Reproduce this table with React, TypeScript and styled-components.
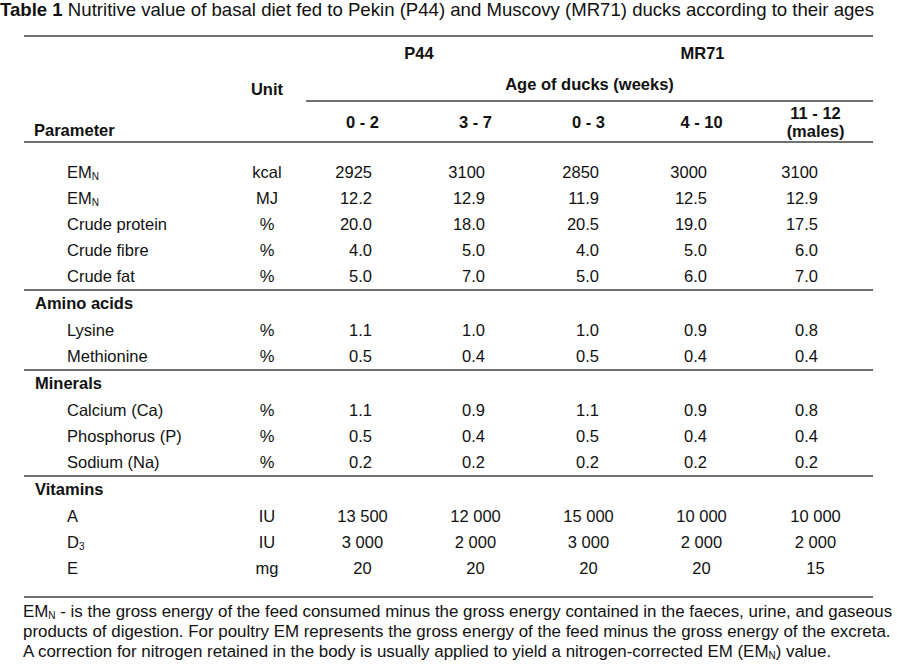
import React from 'react';
import styled, { createGlobalStyle } from 'styled-components';

const GlobalStyle = createGlobalStyle`
  html, body {
    margin: 0;
    padding: 0;
    background: #ffffff;
  }
  body {
    font-family: 'Liberation Sans', Arial, sans-serif;
    color: #111111;
  }
`;

const Page = styled.div`
  width: 897px;
  height: 664px;
  overflow: hidden;
  font-size: 16.5px;
`;

const Title = styled.div`
  font-size: 18.6px;
  line-height: 19px;
  white-space: nowrap;
  b {
    font-weight: bold;
  }
`;

const Table = styled.table`
  margin: 16px 0 0 24px;
  width: 849px;
  table-layout: fixed;
  border-collapse: collapse;
  border-top: 2px solid #707070;
`;

const HeadCell = styled.th<{ $align?: 'left' | 'center'; $valign?: 'top' | 'middle' | 'bottom'; $rule?: boolean; $h?: number }>`
  font-weight: bold;
  padding: 0;
  text-align: ${p => p.$align || 'center'};
  vertical-align: ${p => p.$valign || 'middle'};
  height: ${p => (p.$h ? `${p.$h}px` : 'auto')};
  line-height: 18px;
  ${p => p.$align === 'left' && 'padding-left: 10px; padding-bottom: 2px;'}
  ${p => p.$rule && 'border-bottom: 2px solid #707070;'}
`;

const Group = styled.tbody`
  border-bottom: 2px solid #707070;
`;

const Row = styled.tr`
  height: 26px;
`;

const Spacer = styled.tr<{ $h: number }>`
  height: ${p => p.$h}px;
`;

const GroupName = styled.td`
  font-weight: bold;
  padding: 0 0 2px 11px;
  line-height: 24px;
`;

const ParamCell = styled.td`
  padding: 0 0 0 43px;
  line-height: 26px;
  white-space: nowrap;
`;

const UnitCell = styled.td`
  padding: 0;
  text-align: center;
  line-height: 26px;
`;

const NUM_PAD = [47, 47, 46, 51, 55];

const NumCell = styled.td<{ $col: number; $center?: boolean }>`
  line-height: 26px;
  padding: 0 ${p => (p.$center ? 0 : NUM_PAD[p.$col])}px 0 0;
  text-align: ${p => (p.$center ? 'center' : 'right')};
`;

const Footnote = styled.div`
  margin: 4px 0 0 23px;
  font-size: 16.9px;
  line-height: 20px;
  white-space: nowrap;
`;

const Sub = styled.sub`
  font-size: 10px;
  vertical-align: -2px;
  line-height: 0;
`;

type DataRow = { name: React.ReactNode; unit: string; values: string[] };

const EMN = (
  <>
    EM<Sub>N</Sub>
  </>
);

const basic: DataRow[] = [
  { name: EMN, unit: 'kcal', values: ['2925', '3100', '2850', '3000', '3100'] },
  { name: EMN, unit: 'MJ', values: ['12.2', '12.9', '11.9', '12.5', '12.9'] },
  { name: 'Crude protein', unit: '%', values: ['20.0', '18.0', '20.5', '19.0', '17.5'] },
  { name: 'Crude fibre', unit: '%', values: ['4.0', '5.0', '4.0', '5.0', '6.0'] },
  { name: 'Crude fat', unit: '%', values: ['5.0', '7.0', '5.0', '6.0', '7.0'] },
];

const aminoAcids: DataRow[] = [
  { name: 'Lysine', unit: '%', values: ['1.1', '1.0', '1.0', '0.9', '0.8'] },
  { name: 'Methionine', unit: '%', values: ['0.5', '0.4', '0.5', '0.4', '0.4'] },
];

const minerals: DataRow[] = [
  { name: 'Calcium (Ca)', unit: '%', values: ['1.1', '0.9', '1.1', '0.9', '0.8'] },
  { name: 'Phosphorus (P)', unit: '%', values: ['0.5', '0.4', '0.5', '0.4', '0.4'] },
  { name: 'Sodium (Na)', unit: '%', values: ['0.2', '0.2', '0.2', '0.2', '0.2'] },
];

const vitamins: DataRow[] = [
  { name: 'A', unit: 'IU', values: ['13 500', '12 000', '15 000', '10 000', '10 000'] },
  { name: <>D<Sub>3</Sub></>, unit: 'IU', values: ['3 000', '2 000', '3 000', '2 000', '2 000'] },
  { name: 'E', unit: 'mg', values: ['20', '20', '20', '20', '15'] },
];

const DataRows: React.FC<{ rows: DataRow[]; center?: boolean }> = ({ rows, center }) => (
  <>
    {rows.map((r, i) => (
      <Row key={i}>
        <ParamCell>{r.name}</ParamCell>
        <UnitCell>{r.unit}</UnitCell>
        {r.values.map((v, j) => (
          <NumCell key={j} $col={j} $center={center}>
            {v}
          </NumCell>
        ))}
      </Row>
    ))}
  </>
);

const App: React.FC = () => {
  return (
    <Page>
      <GlobalStyle />
      <Title>
        <b>Table 1</b> Nutritive value of basal diet fed to Pekin (P44) and Muscovy (MR71) ducks according to their ages
      </Title>

      <Table>
        <colgroup>
          <col style={{ width: 204 }} />
          <col style={{ width: 78 }} />
          <col style={{ width: 113 }} />
          <col style={{ width: 113 }} />
          <col style={{ width: 113 }} />
          <col style={{ width: 113 }} />
          <col style={{ width: 115 }} />
        </colgroup>
        <thead>
          <tr>
            <HeadCell rowSpan={3} $align="left" $valign="bottom" $rule>
              Parameter
            </HeadCell>
            <HeadCell rowSpan={3} $rule>
              Unit
            </HeadCell>
            <HeadCell colSpan={2} $h={31}>
              P44
            </HeadCell>
            <HeadCell colSpan={3} $h={31}>
              MR71
            </HeadCell>
          </tr>
          <tr>
            <HeadCell colSpan={5} $rule $h={32}>
              Age of ducks (weeks)
            </HeadCell>
          </tr>
          <tr>
            <HeadCell $rule $h={39}>0 - 2</HeadCell>
            <HeadCell $rule $h={39}>3 - 7</HeadCell>
            <HeadCell $rule $h={39}>0 - 3</HeadCell>
            <HeadCell $rule $h={39}>4 - 10</HeadCell>
            <HeadCell $rule $h={39}>
              11 - 12
              <br />
              (males)
            </HeadCell>
          </tr>
        </thead>

        <Group>
          <Spacer $h={17} />
          <DataRows rows={basic} />
        </Group>

        <Group>
          <Row>
            <GroupName colSpan={7}>Amino acids</GroupName>
          </Row>
          <DataRows rows={aminoAcids} />
        </Group>

        <Group>
          <Row>
            <GroupName colSpan={7}>Minerals</GroupName>
          </Row>
          <DataRows rows={minerals} />
        </Group>

        <Group>
          <Row>
            <GroupName colSpan={7}>Vitamins</GroupName>
          </Row>
          <DataRows rows={vitamins} center />
          <Spacer $h={16} />
        </Group>
      </Table>

      <Footnote>
        EM<Sub>N</Sub> - is the gross energy of the feed consumed minus the gross energy contained in the faeces, urine, and gaseous
        <br />
        products of digestion. For poultry EM represents the gross energy of the feed minus the gross energy of the excreta.
        <br />
        A correction for nitrogen retained in the body is usually applied to yield a nitrogen-corrected EM (EM<Sub>N</Sub>) value.
      </Footnote>
    </Page>
  );
};

export default App;
